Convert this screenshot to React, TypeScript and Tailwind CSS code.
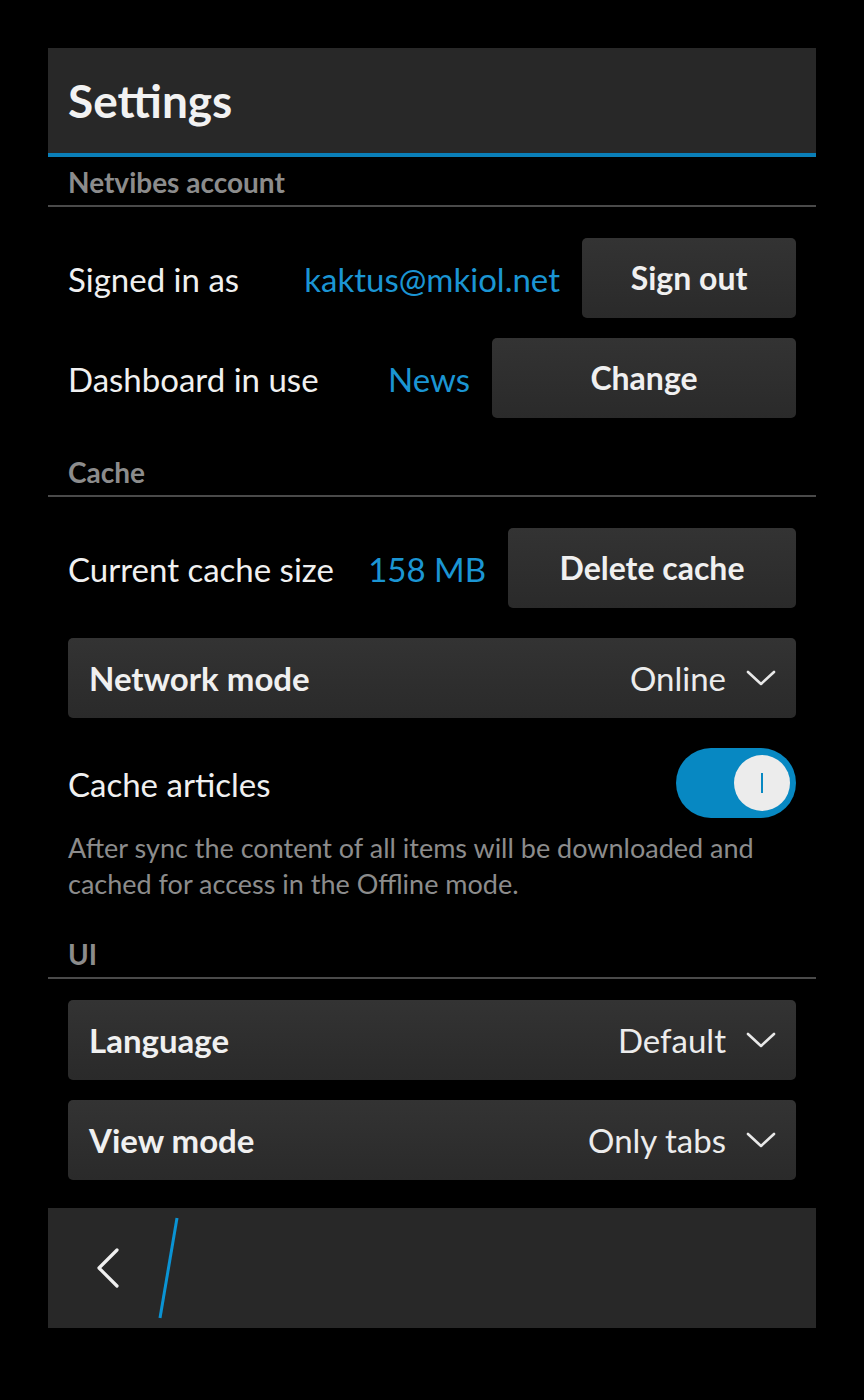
import type { FC, ReactNode } from 'react';

const Chevron: FC = () => (
  <svg width="30" height="18" viewBox="0 0 30 18" fill="none" className="ml-5">
    <path d="M2 3 L15 15 L28 3" stroke="#e8e8e8" strokeWidth="2.6" strokeLinecap="round" strokeLinejoin="round" />
  </svg>
);

const SectionHeader: FC<{ title: string; className?: string }> = ({ title, className = '' }) => (
  <div className={`h-[50px] border-b-2 border-[#4a4a4a] px-5 flex items-center pt-[2px] ${className}`}>
    <span className="text-[28px] font-bold text-[#8c8c8c] leading-none">{title}</span>
  </div>
);

const ActionRow: FC<{ label: string; value: string; action: string; width: string; className?: string }> = ({
  label,
  value,
  action,
  width,
  className = '',
}) => (
  <div className={`flex items-center px-5 h-[80px] ${className}`}>
    <span className="text-[33px] text-[#f0f0f0] whitespace-nowrap pt-[3px]">{label}</span>
    <span className="flex-1 text-right text-[33px] text-[#1b95d3] pr-[22px] pt-[3px] whitespace-nowrap">{value}</span>
    <button className={`${width} h-[80px] rounded-[5px] bg-gradient-to-b from-[#333333] to-[#2a2a2a] text-[32px] font-bold text-[#f0f0f0]`}>
      {action}
    </button>
  </div>
);

const Dropdown: FC<{ label: string; value: string; className?: string }> = ({ label, value, className = '' }) => (
  <div className={`mx-5 h-[80px] rounded-[5px] bg-gradient-to-b from-[#333333] to-[#2a2a2a] flex items-center pl-[21px] pr-[20px] ${className}`}>
    <span className="text-[33px] font-bold text-[#f0f0f0] pt-[2px]">{label}</span>
    <span className="flex-1 text-right text-[33px] text-[#ececec] pt-[2px]">{value}</span>
    <Chevron />
  </div>
);

const Panel: FC<{ children: ReactNode }> = ({ children }) => <div className="w-[768px] mx-auto">{children}</div>;

export default function App() {
  return (
    <div className="min-h-[1400px] bg-black pt-[48px] font-['Lato',sans-serif]">
      <Panel>
        <div className="h-[109px] bg-[#282828] border-b-4 border-[#0a7fb8] px-5 flex items-center">
          <h1 className="text-[46px] font-bold text-[#f2f2f2] leading-none">Settings</h1>
        </div>

        <SectionHeader title="Netvibes account" />
        <ActionRow label="Signed in as" value="kaktus@mkiol.net" action="Sign out" width="w-[214px]" className="mt-[31px]" />
        <ActionRow label="Dashboard in use" value="News" action="Change" width="w-[304px]" className="mt-[20px]" />

        <SectionHeader title="Cache" className="mt-[29px]" />
        <ActionRow label="Current cache size" value="158 MB" action="Delete cache" width="w-[288px]" className="mt-[31px]" />
        <Dropdown label="Network mode" value="Online" className="mt-[30px]" />

        <div className="mt-[30px] px-5 flex items-center justify-between h-[70px]">
          <span className="text-[33px] text-[#f0f0f0] pt-[3px]">Cache articles</span>
          <div className="w-[120px] h-[70px] rounded-full bg-[#0788c2] flex items-center justify-end pr-[6px]">
            <div className="w-[56px] h-[56px] rounded-full bg-[#ececec] flex items-center justify-center">
              <div className="w-[2px] h-[20px] bg-[#0788c2]" />
            </div>
          </div>
        </div>
        <p className="mt-[12px] px-5 text-[27px] leading-[36px] text-[#8c8c8c]">
          After sync the content of all items will be downloaded and cached for access in the Offline mode.
        </p>

        <SectionHeader title="UI" className="mt-[27px]" />
        <Dropdown label="Language" value="Default" className="mt-[21px]" />
        <Dropdown label="View mode" value="Only tabs" className="mt-[20px]" />

        <div className="mt-[28px] h-[120px] bg-[#282828] flex items-center">
          <svg width="140" height="120" viewBox="0 0 140 120" fill="none">
            <path d="M69 42 L51 60 L69 78" stroke="#f0f0f0" strokeWidth="3.2" strokeLinecap="round" strokeLinejoin="round" />
            <path d="M129 10 L112 110" stroke="#0a93d4" strokeWidth="3" />
          </svg>
        </div>
      </Panel>
    </div>
  );
}
